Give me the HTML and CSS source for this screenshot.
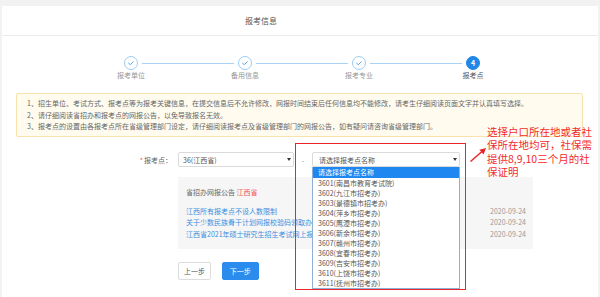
FILE: index.html
```html
<!DOCTYPE html>
<html lang="zh-CN">
<head>
<meta charset="utf-8">
<title>报考信息</title>
<link rel="stylesheet" href="styles.css">
</head>
<body>
<div class="page">
  <div class="header"><span class="title">报考信息</span></div>

  <div class="steps">
    <div class="step">
      <span class="dot"><svg viewBox="0 0 12 12" width="12" height="12"><path d="M3.6 6.2 L5.3 7.7 L8.3 4.7" fill="none" stroke="#5aa6ec" stroke-width="1" stroke-linecap="round" stroke-linejoin="round"/></svg></span>
      <span class="label">报考单位</span>
    </div>
    <div class="conn"></div>
    <div class="step">
      <span class="dot"><svg viewBox="0 0 12 12" width="12" height="12"><path d="M3.6 6.2 L5.3 7.7 L8.3 4.7" fill="none" stroke="#5aa6ec" stroke-width="1" stroke-linecap="round" stroke-linejoin="round"/></svg></span>
      <span class="label">备用信息</span>
    </div>
    <div class="conn"></div>
    <div class="step">
      <span class="dot"><svg viewBox="0 0 12 12" width="12" height="12"><path d="M3.6 6.2 L5.3 7.7 L8.3 4.7" fill="none" stroke="#5aa6ec" stroke-width="1" stroke-linecap="round" stroke-linejoin="round"/></svg></span>
      <span class="label">报考专业</span>
    </div>
    <div class="conn"></div>
    <div class="step active">
      <span class="dot">4</span>
      <span class="label">报考点</span>
    </div>
  </div>

  <div class="notice">
    <p>1、招生单位、考试方式、报考点等为报考关键信息，在提交信息后不允许修改，网报时间结束后任何信息均不能修改，请考生仔细阅读页面文字并认真填写选择。</p>
    <p>2、请仔细阅读省招办和报考点的网报公告，以免导致报名无效。</p>
    <p>3、报考点的设置由各报考点所在省级管理部门设定，请仔细阅读报考点及省级管理部门的网报公告，如有疑问请咨询省级管理部门。</p>
  </div>

  <div class="row">
    <label class="lbl"><i class="req">*</i>报考点：</label>
    <div class="sel sel1"><span>36(江西省)</span><span class="caret"></span></div>
    <span class="dash">-</span>
    <div class="selwrap">
      <div class="sel sel2"><span>请选择报考点名称</span><span class="caret"></span></div>
      <ul class="dropdown">
        <li class="hl">请选择报考点名称</li>
        <li>3601(南昌市教育考试院)</li>
        <li>3602(九江市招考办)</li>
        <li>3603(景德镇市招考办)</li>
        <li>3604(萍乡市招考办)</li>
        <li>3605(鹰潭市招考办)</li>
        <li>3606(新余市招考办)</li>
        <li>3607(赣州市招考办)</li>
        <li>3608(宜春市招考办)</li>
        <li>3609(吉安市招考办)</li>
        <li>3610(上饶市招考办)</li>
        <li>3611(抚州市招考办)</li>
      </ul>
    </div>
  </div>

  <div class="board">
    <div class="board-title">省招办网报公告 <span class="prov">江西省</span></div>
    <ul class="news">
      <li><span class="link">江西所有报考点不设人数限制</span><span class="date">2020-09-24</span></li>
      <li><span class="link">关于少数民族骨干计划网报校验码领取办</span><span class="date">2020-09-24</span></li>
      <li><span class="link">江西省2021年硕士研究生招生考试网上报</span><span class="date">2020-09-24</span></li>
    </ul>
  </div>

  <div class="btns">
    <button class="btn prev">上一步</button>
    <button class="btn next">下一步</button>
  </div>
</div>

<div class="redbox"></div>
<svg class="arrow" viewBox="0 0 600 297" width="600" height="297">
  <line x1="470.5" y1="161.5" x2="482" y2="151.5" stroke="#e8262a" stroke-width="1.5"/>
  <polygon points="486,148 483.6,154.4 479.4,149.8" fill="#e8262a"/>
</svg>
<div class="callout">选择户口所在地或者社<br>保所在地均可，社保需<br>提供8,9,10三个月的社<br>保证明</div>
</body>
</html>
```

FILE: styles.css
```css
* { box-sizing: border-box; }
html, body { margin: 0; padding: 0; }
body {
  background: #f2f2f2;
  font-family: "Noto Sans CJK SC", "Microsoft YaHei", "Noto Sans", sans-serif;
  width: 600px;
  height: 297px;
  overflow: hidden;
  position: relative;
  padding-top: 6px;
}
.page {
  background: #fff;
  margin: 0 2px;
  height: 291px;
}
.header {
  height: 30px;
  border-bottom: 1px solid #ececec;
  display: flex;
  align-items: center;
  padding-left: 243px;
}
.title {
  font-size: 8px;
  color: #555;
}

/* steps */
.steps {
  display: flex;
  align-items: flex-start;
  padding-left: 122px;
  margin-top: 20px;
}
.step {
  width: 14px;
  display: flex;
  flex-direction: column;
  align-items: center;
}
.dot {
  width: 14px;
  height: 14px;
  border: 1px solid #9ccdf5;
  border-radius: 50%;
  display: flex;
  align-items: center;
  justify-content: center;
  background: #fff;
}
.step.active .dot {
  background: #1f87e8;
  border-color: #1f87e8;
  color: #fff;
  font-size: 7px;
  font-weight: bold;
  line-height: 1;
}
.label {
  margin-top: 1px;
  font-size: 7px;
  line-height: 9px;
  color: #999;
  white-space: nowrap;
}
.step.active .label { color: #555; }
.conn {
  width: 92px;
  height: 1px;
  margin: 6.5px 4px 0;
  background: #a8d3f6;
}

/* notice */
.notice {
  margin: 13px 15px 0 14px;
  border: 1px solid #f8e2ae;
  background: #fffcef;
  border-radius: 2px;
  padding: 4px 10px 3.5px;
}
.notice p {
  margin: 0;
  font-size: 7px;
  line-height: 11.5px;
  color: #666;
  white-space: nowrap;
}

/* form row */
.row {
  display: flex;
  align-items: center;
  margin-top: 15px;
}
.lbl {
  width: 170px;
  text-align: right;
  margin-right: 6px;
  font-size: 7px;
  color: #666;
}
.req {
  font-style: normal;
  color: #f0574f;
  margin-right: 1px;
}
.sel {
  height: 15px;
  border: 1px solid #dadada;
  border-radius: 2px;
  padding: 0 2.5px 0 4px;
  display: flex;
  align-items: center;
  justify-content: space-between;
  font-size: 7px;
  color: #555;
  background: #fff;
}
.sel1 { width: 116px; }
.caret {
  width: 0;
  height: 0;
  border-left: 2px solid transparent;
  border-right: 2px solid transparent;
  border-top: 3px solid #333;
}
.dash {
  width: 18px;
  text-align: center;
  font-size: 7px;
  color: #888;
}
.selwrap {
  position: relative;
  width: 148px;
}
.sel2 { width: 148px; padding-left: 6px; }
.dropdown {
  position: absolute;
  top: 100%;
  left: 0;
  width: 148px;
  margin: 0;
  padding: 0;
  list-style: none;
  background: #fff;
  border: 1px solid #8fb0d6;
  border-top: none;
  z-index: 2;
}
.dropdown li {
  height: 10px;
  line-height: 10px;
  padding-left: 5px;
  font-size: 7px;
  color: #555;
  white-space: nowrap;
}
.dropdown li.hl {
  height: 11px;
  line-height: 10.5px;
  background: #1e88f0;
  color: #fff;
}

/* board */
.board {
  margin: 10px 0 0 176px;
  width: 355px;
  background: #f6f6f6;
  padding: 9.5px 7px 9.3px 8px;
}
.board-title {
  font-size: 7px;
  line-height: 10px;
  color: #666;
}
.prov { color: #f0574f; }
.news {
  list-style: none;
  margin: 9.6px 0 0;
  padding: 0;
}
.news li {
  display: flex;
  justify-content: space-between;
  font-size: 7px;
  line-height: 11.2px;
}
.link {
  color: #3d8fe0;
  white-space: nowrap;
}
.date {
  color: #999;
  margin-left: 8px;
}

/* buttons */
.btns {
  display: flex;
  margin: 13px 0 0 176px;
}
.btn {
  height: 17.5px;
  border-radius: 2px;
  font-family: inherit;
  font-size: 7px;
  padding: 0;
  cursor: pointer;
}
.prev {
  width: 33px;
  border: 1px solid #dcdcdc;
  background: #fff;
  color: #555;
}
.next {
  width: 37px;
  margin-left: 10.7px;
  border: 1px solid #2b8cee;
  background: #2b8cee;
  color: #fff;
}

/* annotations */
.redbox {
  position: absolute;
  left: 295px;
  top: 143px;
  width: 171px;
  height: 147px;
  border: 1.5px solid #e8262a;
  z-index: 3;
}
.arrow {
  position: absolute;
  left: 0;
  top: 0;
  z-index: 3;
}
.callout {
  position: absolute;
  left: 487px;
  top: 124.5px;
  font-size: 10.5px;
  line-height: 13.5px;
  color: #f52b2b;
  white-space: nowrap;
  z-index: 3;
}
```
